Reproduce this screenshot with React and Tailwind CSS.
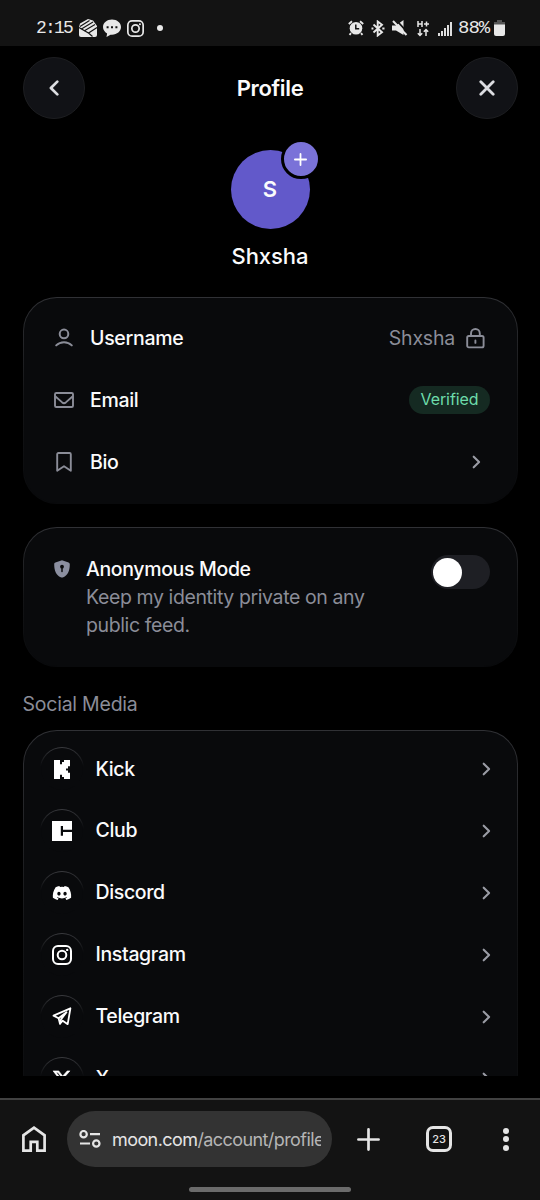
import { FaDiscord, FaXTwitter } from "react-icons/fa6";

const Chevron = () => (
  <svg width="9" height="14" viewBox="0 0 9 14" fill="none" stroke="#9a9ca5" strokeWidth="2.1" strokeLinecap="round" strokeLinejoin="round">
    <path d="M1.7 1.7 7.1 7 1.7 12.3" />
  </svg>
);

const UserIcon = (
  <svg width="20" height="20" viewBox="0 0 20 20" fill="none" stroke="#8b8d98" strokeWidth="2" strokeLinecap="round">
    <circle cx="10" cy="5.9" r="4.3" />
    <path d="M2.2 17.4c4.2-4.3 11.4-4.3 15.6 0" />
  </svg>
);

const MailIcon = (
  <svg width="20" height="16" viewBox="0 0 20 16" fill="none" stroke="#8b8d98" strokeWidth="1.9" strokeLinejoin="round">
    <rect x="1" y="1" width="18" height="14" rx="1.3" />
    <path d="m1.2 4.2 7 6.2q1.8 1.5 3.6 0l7-6.2" />
  </svg>
);

const BookmarkIcon = (
  <svg width="16" height="20" viewBox="0 0 16 20" fill="none" stroke="#8b8d98" strokeWidth="1.9" strokeLinejoin="round">
    <path d="M1.2 2.2q0-1.2 1.2-1.2h11.2q1.2 0 1.2 1.2v16.6L8 14.2l-6.8 4.6Z" />
  </svg>
);

const LockIcon = (
  <svg width="19" height="21" viewBox="0 0 19 21" fill="none" stroke="#8b8d98" strokeWidth="1.9" strokeLinecap="round">
    <rect x="1.2" y="8" width="16.4" height="11.4" rx="1.6" />
    <path d="M5 7.6V5.4a4.4 4.4 0 0 1 8.8 0v2.2M9.4 12.5v2.4" />
  </svg>
);

const ShieldIcon = (
  <svg width="16" height="18" viewBox="0 0 16 18">
    <path d="M8 .3 14.6 2.6Q15.8 3 15.8 4.3C15.8 11 13.8 15.3 9.3 17.3q-1.3.6-2.6 0C2.2 15.3.2 11 .2 4.3.2 3 .8 2.8 1.4 2.6Z" fill="#8b8fa0" />
    <circle cx="8" cy="6.7" r="1.9" fill="#0a0b0d" />
    <path d="M8 7v4.6" stroke="#0a0b0d" strokeWidth="1.5" strokeLinecap="round" />
  </svg>
);

const InstagramIcon = ({ size = 20 }) => (
  <svg width={size} height={size} viewBox="0 0 20 20" fill="none" stroke="currentColor" strokeWidth="2">
    <rect x="1" y="1" width="18" height="18" rx="5" />
    <circle cx="10" cy="10" r="4.3" />
    <circle cx="15.2" cy="4.9" r="1.2" fill="currentColor" stroke="none" />
  </svg>
);

const KickIcon = (
  <svg width="16" height="19" viewBox="1.333 0 21.334 24" preserveAspectRatio="none" fill="currentColor">
    <path d="M1.333 0h8v5.333H12V2.667h2.667V0h8v8H20v2.667h-2.667v2.666H20V16h2.667v8h-8v-2.667H12v-2.666H9.333V24h-8Z" />
  </svg>
);

const ClubIcon = (
  <svg width="20" height="20" viewBox="0 0 20 20" fill="currentColor">
    <path d="M0 0h20v8.7h-9V5H8.8v9.8H11V11h9v9H0Z" />
  </svg>
);

const TelegramIcon = (
  <svg width="20" height="19" viewBox="0 0 20 19" fill="none" stroke="currentColor" strokeWidth="1.8" strokeLinejoin="round" strokeLinecap="round">
    <path d="M1.5 8.6 18.4 1.3 15.7 17.2 10.7 13.7 8 16.7 6.6 11.2Z" />
    <path d="M6.6 11.2 14.5 5.2 9 12.4 8 16.7" />
  </svg>
);

const socials = [
  { label: "Kick", icon: KickIcon },
  { label: "Club", icon: ClubIcon },
  { label: "Discord", icon: <FaDiscord size={20} /> },
  { label: "Instagram", icon: <InstagramIcon /> },
  { label: "Telegram", icon: TelegramIcon },
  { label: "X", icon: <FaXTwitter size={20} strokeWidth={14} stroke="currentColor" /> },
];

const StatusBar = () => (
  <div className="flex h-[46px] shrink-0 items-start justify-between bg-[#131313] pl-9 pr-[35px] pt-[18px] text-[#e8e8e8]">
    <div className="flex h-5 items-center">
      <span className="w-[43px] font-['Liberation_Mono'] text-[18px] tracking-[-1.8px]">2:15</span>
      <svg width="18" height="18" viewBox="0 0 18 18">
        <path d="M0 8 1 4.5 9 0l5 1.5L18 7v9q0 2-2 2H2q-2 0-2-2Z" fill="#e8e8e8" />
        <path d="M1 7.5 10.5 1.5M2 10.3 14 3M5 12 16 5.5M0 8.5 9.5 14 18 8.5M9.5 14l4 3.5" fill="none" stroke="#131313" strokeWidth="1.1" />
      </svg>
      <svg className="ml-1.5" width="18" height="18" viewBox="0 0 18 18">
        <path d="M9 .5c5 0 9 3.2 9 7.6s-4 7.6-9 7.6H7.5L3.5 18l.6-3.5C1.5 13 0 10.7 0 8.1 0 3.7 4 .5 9 .5Z" fill="#e8e8e8" />
        <path d="M3.6 7.2h2v2h-2zM8 7.2h2v2H8zM12.4 7.2h2v2h-2z" fill="#131313" />
      </svg>
      <span className="ml-1.5"><InstagramIcon size={17} /></span>
      <span className="ml-[13px] size-1.5 rounded-full bg-[#e8e8e8]" />
    </div>
    <div className="flex h-5 items-center">
      <svg width="16" height="16" viewBox="0 0 16 16">
        <path d="M.8 4 4 1.3M15.2 4 12 1.3M3 13.2l-1.5 1.6M13 13.2l1.5 1.6" stroke="currentColor" strokeWidth="1.9" />
        <circle cx="8" cy="8.3" r="6.3" fill="currentColor" />
        <path d="M7.8 4.5v4.3h3.4" fill="none" stroke="#131313" strokeWidth="1.5" />
      </svg>
      <svg className="ml-[7px]" width="14" height="17" viewBox="0 0 14 17" fill="none" stroke="currentColor" strokeWidth="1.9">
        <path d="m2.5 4.5 8.5 7.7L6.7 15.5V1.5L11 4.8 2.5 12.5" />
        <path d="M.5 8.5h1.9M11.3 8.5h2.2" strokeWidth="2.2" />
      </svg>
      <svg className="ml-[7px]" width="16" height="16" viewBox="0 0 16 16">
        <path d="M0 5.5h4L11.5 0v15L4 10.5H0Z" fill="currentColor" />
        <path d="M3.7-.5 16 13" stroke="#131313" strokeWidth="1.8" />
        <path d="m1 1 13.5 14" stroke="currentColor" strokeWidth="2" />
      </svg>
      <svg className="ml-[9px]" width="12" height="17" viewBox="0 0 12 17" fill="none" stroke="currentColor" strokeWidth="1.5">
        <path d="M1 1v6M5 1v6M1 4h4M7 4h5M9.5 1.5v5M3 9v6.5M.8 13.2 3 15.5l2.2-2.3M9 16V9.5M6.8 11.8 9 9.5l2.2 2.3" />
      </svg>
      <svg className="ml-[9px]" width="14" height="15" viewBox="0 0 14 15" stroke="currentColor" strokeWidth="1.9">
        <path d="M1 12v3M4 10v5M7 7v8M10 4v11M13 1v14" />
      </svg>
      <span className="ml-[6px] w-[35px] whitespace-nowrap font-['Liberation_Mono'] text-[19px] tracking-[-1px]">88%</span>
      <svg className="ml-px" width="11" height="16" viewBox="0 0 11 16">
        <path d="M3 0h5v2h3v4H0V2h3Z" fill="#555" />
        <path d="M0 4.5h11V14q0 2-2 2H2q-2 0-2-2Z" fill="#e8e8e8" />
      </svg>
    </div>
  </div>
);

const Card = ({ className = "", children }) => (
  <div className="rounded-[34px] bg-linear-to-b from-[#303135] via-[#131416] via-50% to-[#090a0c] p-px">
    <div className={`rounded-[33px] bg-[#090a0c] ${className}`}>{children}</div>
  </div>
);

const InfoRow = ({ icon, label, children }) => (
  <div className="flex h-[62px] items-center">
    <div className="flex w-5 justify-center">{icon}</div>
    <span className="ml-4 flex-1 font-medium tracking-[-0.3px]">{label}</span>
    {children}
  </div>
);

const BottomBar = () => (
  <div className="flex h-[102px] shrink-0 flex-col border-t-2 border-[#414141] bg-[#131313] text-[#e5e5e5]">
    <div className="mt-[11px] flex h-14 items-center pl-[22px] pr-[30px]">
      <svg width="24" height="26" viewBox="0 0 24 26" fill="none" stroke="currentColor" strokeWidth="2.7">
        <path d="M1.4 24.6V9.3L12 1.7l10.6 7.6v15.3h-7.3v-8.7H8.7v8.7Z" />
      </svg>
      <div className="ml-[21px] flex h-14 w-[265px] items-center rounded-full bg-[#333] pl-3">
        <svg width="22" height="18" viewBox="0 0 22 18" fill="none" stroke="currentColor" strokeWidth="2.2">
          <circle cx="4.6" cy="4.2" r="3.2" />
          <circle cx="17.3" cy="13.5" r="3.2" />
          <path d="M11 4.2h10M1 13.5h10" />
        </svg>
        <div className="ml-[11px] w-[209px] overflow-hidden whitespace-nowrap text-[18px] tracking-[-0.58px] text-[#b5b5b5]">
          <span className="text-[#e5e5e5]">moon.com</span>/account/profile
        </div>
      </div>
      <svg className="ml-[25px]" width="23" height="23" viewBox="0 0 23 23" stroke="currentColor" strokeWidth="2.7" strokeLinecap="round">
        <path d="M11.5 1.4v20.2M1.4 11.5h20.2" />
      </svg>
      <div className="ml-[46px] flex size-[26px] items-center justify-center rounded-[7px] border-3 border-[#e5e5e5] text-[11px] font-medium">
        23
      </div>
      <div className="ml-auto flex w-2 flex-col items-center gap-[2.5px]">
        <span className="size-1.5 rounded-full bg-[#e5e5e5]" />
        <span className="size-1.5 rounded-full bg-[#e5e5e5]" />
        <span className="size-1.5 rounded-full bg-[#e5e5e5]" />
      </div>
    </div>
    <div className="mx-auto mt-[20px] h-[5px] w-[162px] rounded-full bg-[#6b6b6b]" />
  </div>
);

const App = () => {
  return (
    <div className="flex h-[1200px] w-[540px] flex-col overflow-hidden bg-black font-['Inter',sans-serif] text-[19.5px] text-[#fbfbfc]">
      <StatusBar />

      <main className="h-[1030px] shrink-0 overflow-hidden px-[22.5px] pt-[11px]">
        {/* Header */}
        <header className="flex items-center justify-between">
          <button className="flex size-[62px] items-center justify-center rounded-full border border-[#1d1e21] bg-[#111216]">
            <svg width="10" height="16" viewBox="0 0 10 16" fill="none" stroke="#dcdde1" strokeWidth="2.7" strokeLinecap="round" strokeLinejoin="round">
              <path d="M8.3 1.6 1.9 8l6.4 6.4" />
            </svg>
          </button>
          <h1 className="text-[22px] font-semibold tracking-[-0.35px]">Profile</h1>
          <button className="flex size-[62px] items-center justify-center rounded-full border border-[#1d1e21] bg-[#111216]">
            <svg width="16" height="16" viewBox="0 0 16 16" stroke="#dcdde1" strokeWidth="2.8" strokeLinecap="round">
              <path d="m1.8 1.8 12.4 12.4M14.2 1.8 1.8 14.2" />
            </svg>
          </button>
        </header>

        {/* Avatar */}
        <div className="relative mx-auto mt-[31px] flex size-[79px] items-center justify-center rounded-full bg-[#6259ca] text-[22px] font-semibold">
          S
          <span className="absolute -right-[11px] -top-[11px] flex size-10 items-center justify-center rounded-full border-3 border-black bg-[#7a72d8]">
            <svg width="13" height="13" viewBox="0 0 13 13" stroke="white" strokeWidth="1.8" strokeLinecap="round">
              <path d="M6.5.9v11.2M.9 6.5h11.2" />
            </svg>
          </span>
        </div>
        <p className="mt-[11px] text-center text-[22px] font-medium leading-8 tracking-[-0.05px]">Shxsha</p>

        <div className="mt-[25px]">
          <Card className="h-[205px] pl-[30.5px] pr-[26.5px] pt-[9.4px]">
            <InfoRow icon={UserIcon} label="Username">
              <span className="mr-[11px] tracking-[-0.2px] text-[#8b8d98]">Shxsha</span>
              <span className="mr-[5px]">{LockIcon}</span>
            </InfoRow>
            <InfoRow icon={MailIcon} label="Email">
              <span className="flex h-7 w-[81px] items-center justify-center rounded-full bg-[#152a22] pb-[2px] text-[16px] tracking-[-0.1px] text-[#6ddcab]">Verified</span>
            </InfoRow>
            <InfoRow icon={BookmarkIcon} label="Bio">
              <span className="mr-[9px]"><Chevron /></span>
            </InfoRow>
          </Card>
        </div>

        <div className="mt-[23px]">
          <Card className="flex h-[138px] items-start pl-[30.5px] pr-[26.5px] pt-[27px]">
            <span className="mt-[5px]">{ShieldIcon}</span>
            <div className="ml-4 flex-1 leading-[28px]">
              <p className="font-medium tracking-[-0.35px]">Anonymous Mode</p>
              <p className="tracking-[-0.39px] text-[#8b8d98]">Keep my identity private on any<br />public feed.</p>
            </div>
            <div className="flex h-[34px] w-[59px] items-center rounded-full bg-[#1e1f24] pl-0.5">
              <span className="size-[29px] rounded-full bg-white" />
            </div>
          </Card>
        </div>

        {/* Social media */}
        <h2 className="mt-[23px] leading-7 tracking-[-0.23px] text-[#8b8d98]">Social Media</h2>
        <div className="mt-3">
          <Card className="h-[420px] pl-[16.5px] pr-[25.5px] pt-[7.2px]">
            {socials.map((item) => (
              <div key={item.label} className="flex h-[61.9px] items-center">
                <div className="size-11 rounded-full bg-linear-to-b from-[#3a3b3f] to-[#090a0c] to-45% p-px">
                  <div className="flex size-full items-center justify-center rounded-full bg-[#090a0c] text-white">{item.icon}</div>
                </div>
                <span className="ml-[11.5px] flex-1 font-medium tracking-[-0.35px]">{item.label}</span>
                <Chevron />
              </div>
            ))}
          </Card>
        </div>
      </main>

      <div className="h-[22px] shrink-0" />
      <BottomBar />
    </div>
  );
};

export default App;
